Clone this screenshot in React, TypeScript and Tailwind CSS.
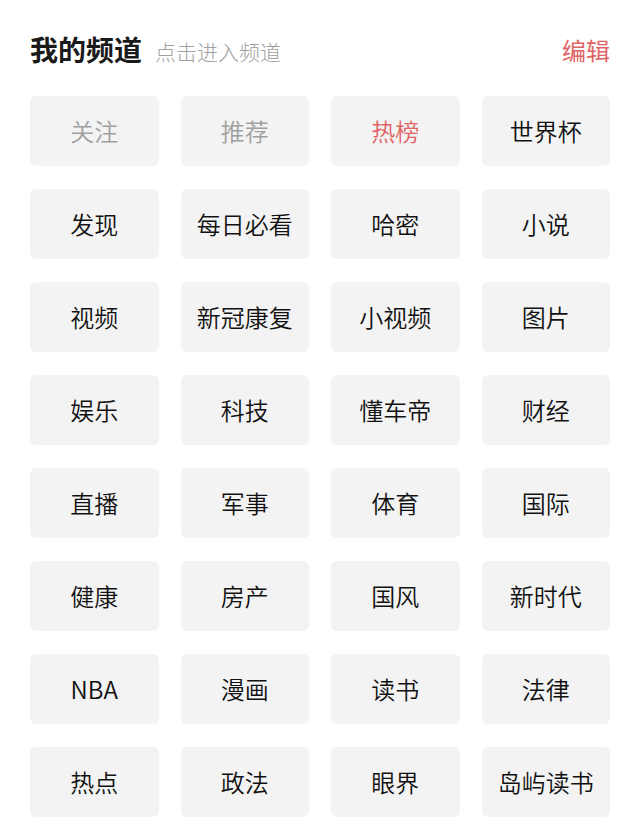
const channels = [
  '关注', '推荐', '热榜', '世界杯',
  '发现', '每日必看', '哈密', '小说',
  '视频', '新冠康复', '小视频', '图片',
  '娱乐', '科技', '懂车帝', '财经',
  '直播', '军事', '体育', '国际',
  '健康', '房产', '国风', '新时代',
  'NBA', '漫画', '读书', '法律',
  '热点', '政法', '眼界', '岛屿读书',
]

const fixed = ['关注', '推荐']

export default function App() {
  return (
    <div
      className="min-h-screen bg-white px-[30px] pt-[34px]"
      style={{ fontFamily: '"Noto Sans CJK SC", "Noto Sans", sans-serif' }}
    >
      <div className="flex h-[30px] items-center justify-between">
        <div className="flex items-center gap-[13px]">
          <span className="text-[28px] font-bold leading-none text-[#1a1a1a]">我的频道</span>
          <span className="mt-[4px] text-[21px] font-light leading-none text-[#a0a0a0]">点击进入频道</span>
        </div>
        <button className="mt-[2px] text-[24px] leading-none text-[#e06464]">编辑</button>
      </div>

      <div className="mt-[32px] grid grid-cols-4 gap-x-[22px] gap-y-[23px]">
        {channels.map((name, i) => {
          const color = fixed.includes(name)
            ? 'text-[#a0a0a0]'
            : i === 2
              ? 'text-[#e06464]'
              : 'text-[#111111]'
          return (
            <div
              key={name + i}
              className={`flex h-[70px] items-center justify-center rounded-[6px] bg-[#f3f3f3] text-[24px] font-[350] leading-none ${color}`}
            >
              {name}
            </div>
          )
        })}
      </div>
    </div>
  )
}
